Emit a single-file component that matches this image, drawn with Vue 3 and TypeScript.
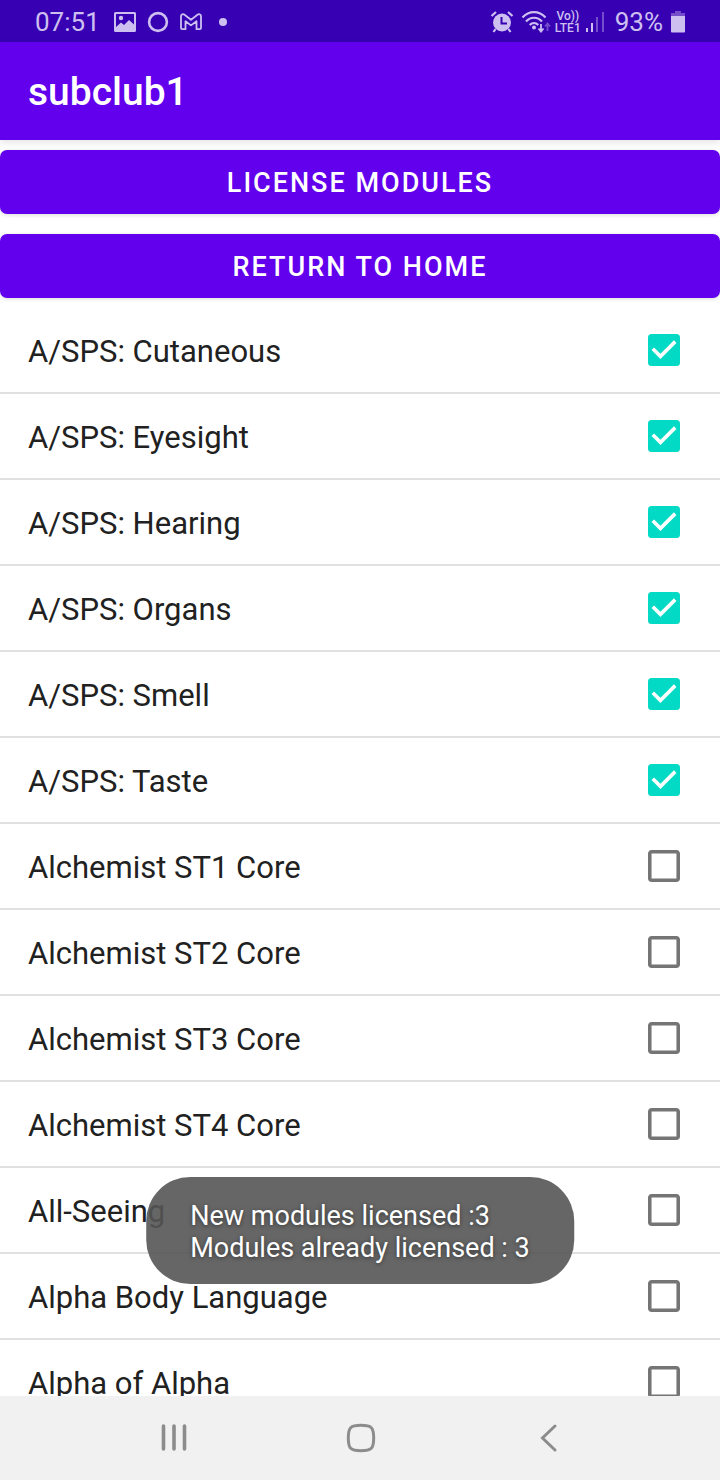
<script setup lang="ts">
import { reactive } from 'vue'

interface Module {
  id: string
  name: string
  licensed: boolean
}

const licensedNames = [
  'A/SPS: Cutaneous',
  'A/SPS: Eyesight',
  'A/SPS: Hearing',
  'A/SPS: Organs',
  'A/SPS: Smell',
  'A/SPS: Taste',
]

const otherNames = [
  'Alchemist ST1 Core',
  'Alchemist ST2 Core',
  'Alchemist ST3 Core',
  'Alchemist ST4 Core',
  'All-Seeing',
  'Alpha Body Language',
  'Alpha of Alpha',
]

const modules = reactive<Module[]>(
  [...licensedNames, ...otherNames].map((name, index) => ({
    id: `module-${index}`,
    name,
    licensed: index < licensedNames.length,
  })),
)
</script>

<template>
  <div class="screen">
    <div class="status-bar">
      <div class="status-left">
        <span class="clock">07:51</span>
        <svg width="22" height="20" viewBox="0 0 22 20" aria-hidden="true">
          <path
            fill="currentColor"
            fill-rule="evenodd"
            d="M1.500 0h19A1.500 1.500 0 0 1 22 1.500v17a1.500 1.500 0 0 1-1.500 1.500h-19A1.500 1.500 0 0 1 0 18.500v-17A1.500 1.500 0 0 1 1.500 0zM2 2v13l5-4.500 3 2.500 5-5 5 4.500V2z"
          />
          <circle cx="7" cy="6" r="2.200" fill="currentColor" />
        </svg>
        <svg width="22" height="22" viewBox="0 0 22 22" aria-hidden="true">
          <circle cx="11" cy="11" r="8.900" fill="none" stroke="currentColor" stroke-width="2.600" />
        </svg>
        <svg width="22" height="18" viewBox="0 0 22 18" aria-hidden="true">
          <path
            fill="none"
            stroke="currentColor"
            stroke-width="1.800"
            stroke-linejoin="round"
            d="M1 3.200C1 1.200 3.200.7 4.500 1.700L11 6.800l6.500-5.100C18.800.7 21 1.200 21 3.200V15c0 .8-.5 1.200-1.200 1.200h-3.300V8.200L11 12.400 5.500 8.200v8H2.200C1.500 16.200 1 15.800 1 15z"
          />
        </svg>
        <span class="more-dot"></span>
      </div>
      <div class="status-right">
        <svg width="24" height="24" viewBox="0 0 24 24" aria-hidden="true">
          <circle cx="12" cy="12.500" r="9" fill="currentColor" />
          <path
            d="M1.500 6L6 2M22.500 6L18 2M5.500 19l-2 3M18.500 19l2 3"
            fill="none"
            stroke="currentColor"
            stroke-width="2.200"
          />
          <path d="M11.500 7v6.500H17" fill="none" stroke="#3700b3" stroke-width="2" />
        </svg>
        <svg class="wifi" width="30" height="24" viewBox="0 0 30 24" aria-hidden="true">
          <g fill="none" stroke="currentColor" stroke-width="2.200">
            <path d="M1.500 7.500C8 .4 18 .4 24.500 7.500" />
            <path d="M5 11.500c4.700-5 11.300-5 16 0" />
            <path d="M8.700 15c2.600-2.700 6-2.700 8.600 0" />
          </g>
          <circle cx="13" cy="17.500" r="2" fill="currentColor" />
          <path d="M20 14v7M17.500 18.500L20 21.500l2.500-3" fill="none" stroke="currentColor" stroke-width="1.800" />
          <path
            d="M26.500 21v-6M24 16.500l2.500-3 2.500 3"
            fill="none"
            stroke="currentColor"
            stroke-width="1.800"
            opacity=".4"
          />
        </svg>
        <span class="volte"><span>Vo))</span><span>LTE1</span></span>
        <svg class="signal" width="20" height="22" viewBox="0 0 20 22" aria-hidden="true">
          <path d="M1 17h2v4H1zM6 12h2v9H6z" fill="currentColor" />
          <path d="M11 6h2v15h-2zM17 1h2v20h-2z" fill="currentColor" opacity=".4" />
        </svg>
        <span class="battery-level">93%</span>
        <svg width="14" height="22" viewBox="0 0 14 22" aria-hidden="true">
          <path d="M4 0h6v2h4v3H0V2h4z" fill="currentColor" opacity=".4" />
          <path d="M0 5h14v15.500a1 1 0 0 1-1 1H1a1 1 0 0 1-1-1z" fill="currentColor" />
        </svg>
      </div>
    </div>

    <header class="app-bar">
      <h1>subclub1</h1>
    </header>

    <main class="content">
      <div class="actions">
        <button type="button">LICENSE MODULES</button>
        <button type="button">RETURN TO HOME</button>
      </div>

      <ul class="modules">
        <li v-for="module in modules" :key="module.id">
          <label :for="module.id">{{ module.name }}</label>
          <input :id="module.id" v-model="module.licensed" type="checkbox" />
        </li>
      </ul>
    </main>

    <div class="toast" role="status">
      <p>New modules licensed :3</p>
      <p>Modules already licensed : 3</p>
    </div>

    <nav class="nav-bar">
      <button type="button" aria-label="Recent apps">
        <svg width="30" height="30" viewBox="0 0 30 30" aria-hidden="true">
          <path d="M4.500 3v23M15 3v23M25.500 3v23" stroke-width="3.600" />
        </svg>
      </button>
      <button type="button" aria-label="Home">
        <svg width="30" height="30" viewBox="0 0 30 30" aria-hidden="true">
          <path
            d="M15 2.300c10.500 0 12.700 2.200 12.700 12.700S25.500 27.700 15 27.700 2.300 25.500 2.300 15 4.500 2.300 15 2.300z"
            stroke-width="3"
          />
        </svg>
      </button>
      <button type="button" aria-label="Back">
        <svg width="30" height="30" viewBox="0 0 30 30" aria-hidden="true">
          <path d="M22 3L9.500 15 22 27" stroke-width="3" />
        </svg>
      </button>
    </nav>
  </div>
</template>

<style>
body {
  margin: 0;
}
</style>

<style scoped>
.screen {
  position: relative;
  display: flex;
  flex-direction: column;
  height: 100vh;
  overflow: hidden;
  background: #fff;
  color: #212121;
  font-family: Roboto, "Noto Sans", sans-serif;
}

.status-bar {
  display: flex;
  flex: none;
  justify-content: space-between;
  box-sizing: border-box;
  height: 42px;
  padding: 1px 35px 0;
  background: #3700b3;
  color: #cdc0f0;
  font-size: 26px;
}

.status-left,
.status-right {
  display: flex;
  align-items: center;
}

.status-left {
  gap: 11px;
}

.clock {
  margin-right: 3px;
  line-height: 42px;
}

.more-dot {
  width: 8px;
  height: 8px;
  margin-left: 6px;
  border-radius: 50%;
  background: currentColor;
}

.wifi {
  margin-left: 7px;
}

.volte {
  display: flex;
  flex-direction: column;
  align-items: center;
  margin-left: 4px;
  font-size: 12px;
  font-weight: 500;
  line-height: 12px;
}

.signal {
  margin-left: 4px;
}

.battery-level {
  margin: 0 8px 0 10px;
  line-height: 42px;
}

.app-bar {
  position: relative;
  display: flex;
  flex: none;
  align-items: center;
  box-sizing: border-box;
  height: 98px;
  padding: 2px 28px 0;
  background: #6200ee;
  box-shadow: 0 2px 8px rgba(0, 0, 0, 0.12);
  color: #fff;
}

.app-bar h1 {
  margin: 0;
  font-size: 39px;
  font-weight: 500;
}

.content {
  flex: 1;
  min-height: 0;
  overflow: hidden;
}

.actions {
  display: flex;
  flex-direction: column;
  gap: 20px;
  padding: 10px 0;
}

.actions button {
  height: 64px;
  padding: 2px 0 0;
  border: 0;
  border-radius: 7px;
  background: #6200ee;
  box-shadow: 0 1px 4px rgba(0, 0, 0, 0.14);
  color: #fff;
  font-family: inherit;
  font-size: 27px;
  font-weight: 500;
  letter-spacing: 2px;
}

.modules {
  margin: 0;
  padding: 0;
  list-style: none;
}

.modules li {
  display: flex;
  align-items: center;
  height: 84px;
  padding: 0 40px 0 28px;
  border-bottom: 2px solid #e0e0e0;
}

.modules label {
  flex: 1;
  padding-top: 4px;
  font-size: 31px;
  line-height: 40px;
}

.modules input {
  appearance: none;
  width: 32px;
  height: 32px;
  margin: 0;
  background: url("data:image/svg+xml,%3Csvg xmlns='http://www.w3.org/2000/svg' viewBox='3 3 18 18'%3E%3Cpath fill='%23757575' d='M19 5v14H5V5h14m0-2H5c-1.100 0-2 .9-2 2v14c0 1.100.9 2 2 2h14c1.100 0 2-.9 2-2V5c0-1.100-.9-2-2-2z'/%3E%3C/svg%3E") center / 100% 100% no-repeat;
}

.modules input:checked {
  background-image: url("data:image/svg+xml,%3Csvg xmlns='http://www.w3.org/2000/svg' viewBox='3 3 18 18'%3E%3Crect x='3' y='3' width='18' height='18' rx='2' fill='%2303dac5'/%3E%3Cpath fill='%23fff' d='M10 17l-5-5 1.410-1.410L10 14.170l7.590-7.590L19 8z'/%3E%3C/svg%3E");
}

.toast {
  position: absolute;
  bottom: 196px;
  left: 50%;
  padding: 23px 44px 20px;
  border-radius: 44px;
  background: rgba(85, 85, 85, 0.9);
  color: #fff;
  font-size: 27px;
  line-height: 32px;
  text-shadow: 0 1px 4px rgba(0, 0, 0, 0.5);
  white-space: nowrap;
  transform: translateX(-50%);
}

.toast p {
  margin: 0;
}

.nav-bar {
  display: grid;
  flex: none;
  grid-template-columns: repeat(3, 1fr);
  height: 84px;
  padding: 0 78px 0 80px;
  background: #f1f1f1;
}

.nav-bar button {
  display: flex;
  align-items: center;
  justify-content: center;
  padding: 0;
  border: 0;
  background: none;
  color: #8c8c8c;
}

.nav-bar svg {
  fill: none;
  stroke: currentColor;
  stroke-linecap: round;
}
</style>
